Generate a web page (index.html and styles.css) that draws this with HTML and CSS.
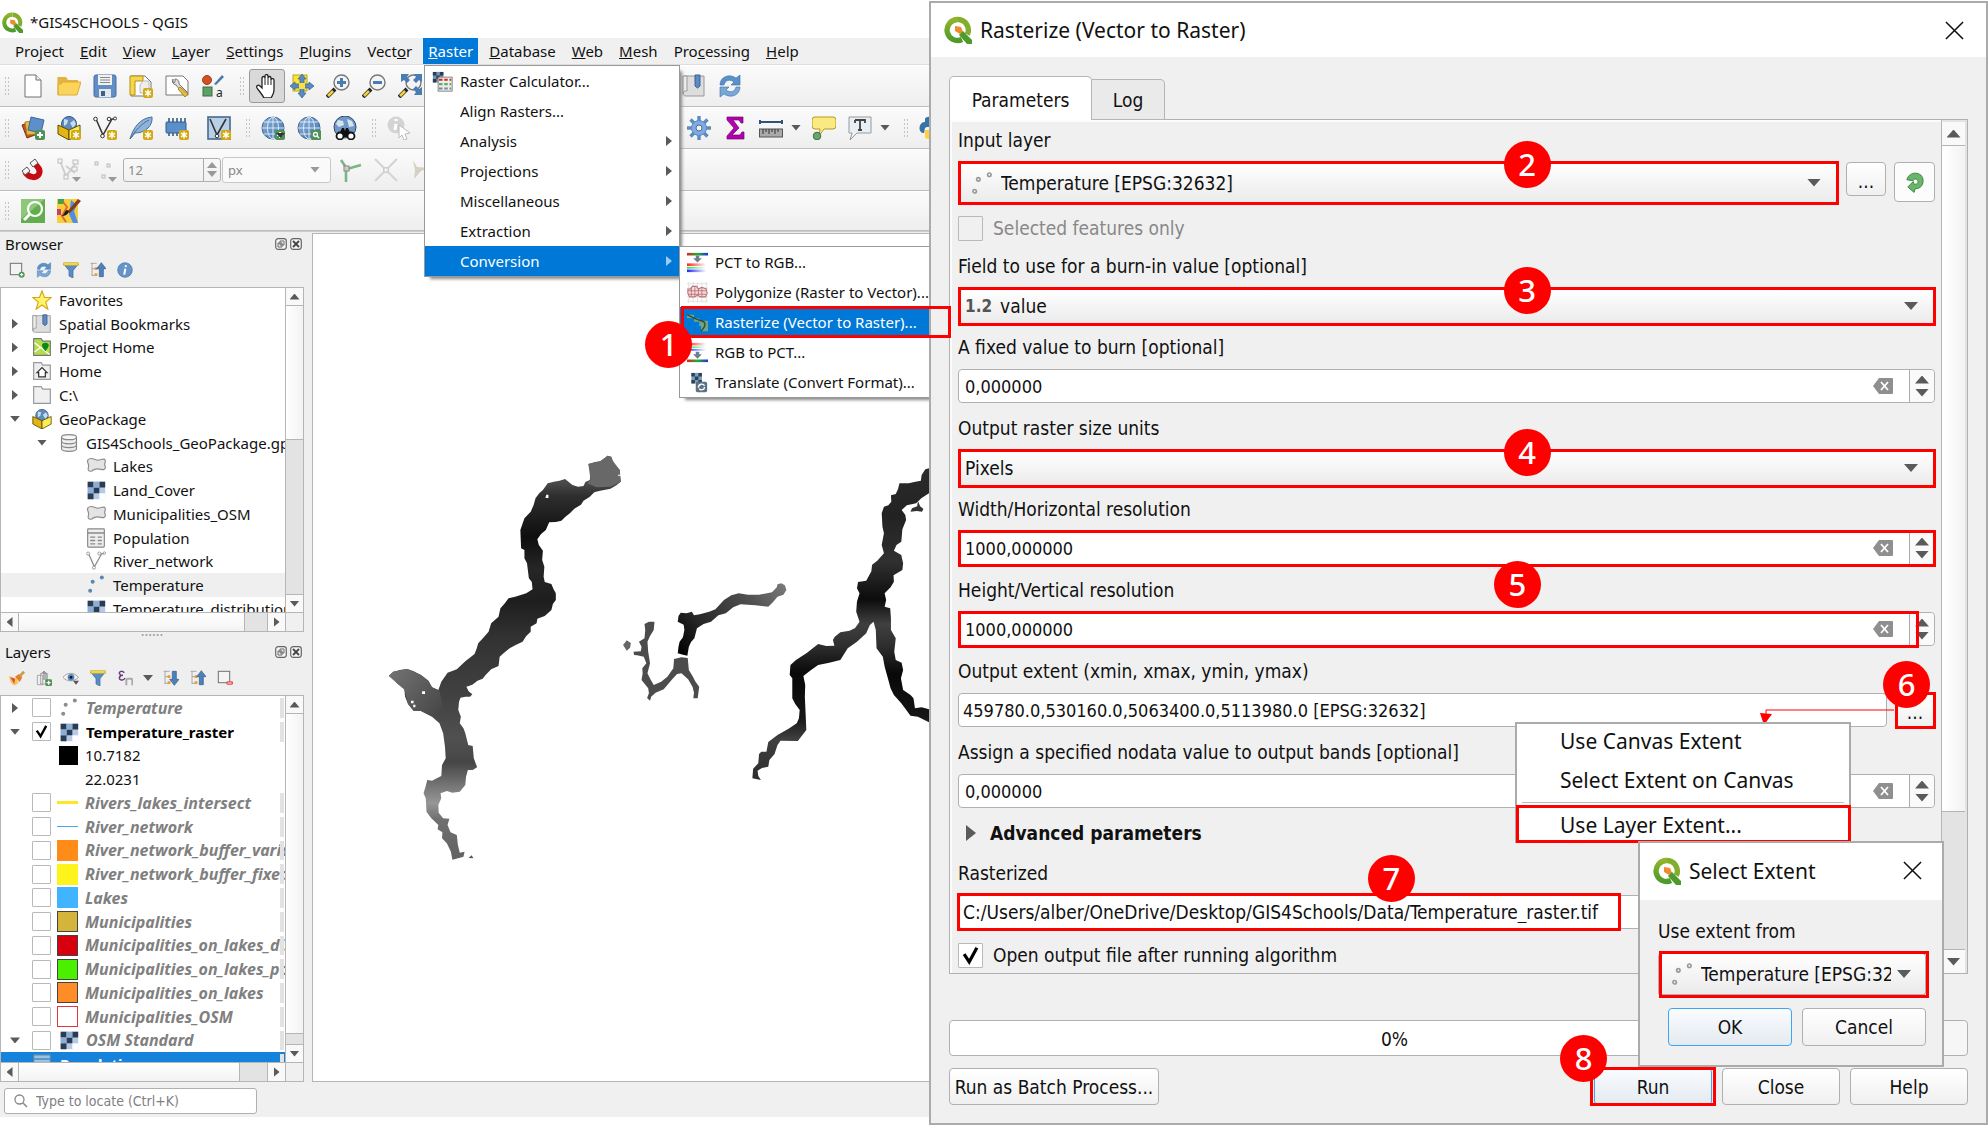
FILE: index.html
```html
<!DOCTYPE html>
<html lang="en">
<head>
<meta charset="utf-8">
<title>*GIS4SCHOOLS - QGIS</title>
<link rel="stylesheet" href="styles.css">
</head>
<body>
<svg class="defs" aria-hidden="true">
  <defs>
    <linearGradient id="gq" x1="0" y1="0" x2="0" y2="1"><stop offset="0" stop-color="#8fb52b"/><stop offset="1" stop-color="#4f9a2c"/></linearGradient>
    <linearGradient id="gb" x1="0" y1="0" x2="1" y2="1"><stop offset="0" stop-color="#8db4dd"/><stop offset="1" stop-color="#3f72ab"/></linearGradient>
    <linearGradient id="spec" x1="0" y1="0" x2="1" y2="0"><stop offset="0" stop-color="#e02020"/><stop offset=".5" stop-color="#20b030"/><stop offset="1" stop-color="#2030e0"/></linearGradient>
    <linearGradient id="fr" x1="0" y1="0" x2="1" y2="0"><stop offset="0" stop-color="#f22"/><stop offset="1" stop-color="#fff"/></linearGradient>
    <linearGradient id="fg" x1="0" y1="0" x2="1" y2="0"><stop offset="0" stop-color="#2d4"/><stop offset="1" stop-color="#fff"/></linearGradient>
    <linearGradient id="fb" x1="0" y1="0" x2="1" y2="0"><stop offset="0" stop-color="#22f"/><stop offset="1" stop-color="#fff"/></linearGradient>
  </defs>
  <symbol id="qgis" viewBox="0 0 28 28"><path d="M14 3.500a10.500 10.500 0 1 0 4 20" fill="none" stroke="url(#gq)" stroke-width="5.400"/><path d="M14 3.500a10.500 10.500 0 0 1 9.300 15" fill="none" stroke="#82ae2b" stroke-width="5.400"/><path d="M11 10l6 1 2 5-3 2-5-3z" fill="#f08a2c"/><path d="M15 19l4-4 9 9v4h-5z" fill="#4f9a2c"/></symbol>
  <symbol id="plus" viewBox="0 0 24 24"><rect x="14" y="14" width="10" height="10" rx="2" fill="#4e9258"/><path d="M19 16v6M16 19h6" stroke="#fff" stroke-width="2"/></symbol>
  <symbol id="star" viewBox="0 0 24 24"><rect x="14" y="14" width="10" height="10" rx="2" fill="#d3a912"/><path d="M19 15.500v7M16 17.200l6 3.600M22 17.200l-6 3.600" stroke="#fff" stroke-width="1.500"/></symbol>
  <symbol id="new" viewBox="0 0 24 24"><path d="M4 1h11l5 5v17H4z" fill="#fff" stroke="#707070"/><path d="M15 1v5h5" fill="#eee" stroke="#707070"/></symbol>
  <symbol id="open" viewBox="0 0 24 24"><path d="M1 3h8l2 3h10v4H1z" fill="#e2b33f"/><path d="M1 21V3M1 21h19l4-13H6L4 10H1z" fill="#fbd45b" stroke="#e0ad38"/></symbol>
  <symbol id="save" viewBox="0 0 24 24"><rect x="1" y="1" width="22" height="22" rx="2" fill="#5f8fc4" stroke="#456f9f"/><path d="M5 1h14v10H5z" fill="#f2f2f2"/><path d="M7 3.500h10M7 6h10M7 8.500h10" stroke="#888"/><path d="M6 15h12v8H6z" fill="#e3e8ee"/><path d="M8 17h4v5H8z" fill="#3d5f88"/></symbol>
  <symbol id="layout" viewBox="0 0 24 24"><path d="M2 2h14l6 6v14H2z" fill="#fff" stroke="#777"/><path d="M1 2h13v5H6v14H1z" fill="#f6d64a" stroke="#b78f14"/><path d="M14 7h6v12h-9v-8z" fill="#eee" stroke="#bbb"/><use href="#star"/></symbol>
  <symbol id="manager" viewBox="0 0 24 24"><path d="M1 2h17l5 5v14H1z" fill="#fff" stroke="#777"/><path d="M8 5a4 4 0 0 0 3 6l9 11 3-3-9-9a4 4 0 0 0-4-5v3l-2 1z" fill="#ddd" stroke="#777"/><path d="M15 13l8 7-3 3-7-8z" fill="#e4bd3a" stroke="#a9862b"/></symbol>
  <symbol id="style" viewBox="0 0 24 24"><circle cx="6" cy="6" r="4.500" fill="#cf5224" stroke="#a33c15"/><path d="M13 10L21 1l2 2-8 8z" fill="#4d79ad"/><rect x="2" y="13" width="9" height="9" fill="#5fa069" stroke="#37723f"/><text x="15" y="23" font-size="12" font-family="Noto Sans" fill="#222">a</text></symbol>
  <symbol id="hand" viewBox="0 0 24 24"><path d="M7 14V4c0-2 3-2 3 0V2c0-2 3-2 3 0v2c0-2 3-2 3 0v2c0-2 3-1.500 3 0v10c0 4-2 6-3 8H9C7 20 4 17 2 14c-1-2 1-4 3-2z" fill="#fff" stroke="#222" stroke-width="1.300"/><path d="M10 4v7M13 4v7M16 6v5" stroke="#222"/></symbol>
  <symbol id="pan" viewBox="0 0 24 24"><rect x="3" y="1" width="14" height="16" fill="#fae13c" stroke="#c4a61b"/><path d="M12 0l4 5h-2v5h5V8l5 4-5 4v-2h-5v5h2l-4 5-4-5h2v-5H5v2l-5-4 5-4v2h5V5H8z" fill="#5b8ac0" stroke="#36618f" stroke-width=".7"/><path d="M9 9h6v6H9z" fill="#fae13c"/></symbol>
  <symbol id="lens" viewBox="0 0 24 24"><path d="M9 15L1 23" stroke="#222" stroke-width="4"/><path d="M7 17l-5 5" stroke="#f5cf3c" stroke-width="2.600"/><circle cx="15.500" cy="8.500" r="7.500" fill="#f4f4f4" stroke="#777" stroke-width="1.400"/></symbol>
  <symbol id="zin" viewBox="0 0 24 24"><use href="#lens"/><path d="M15.500 4v9M11 8.500h9" stroke="#4a7bb5" stroke-width="3"/></symbol>
  <symbol id="zout" viewBox="0 0 24 24"><use href="#lens"/><path d="M11 8.500h9" stroke="#4a7bb5" stroke-width="3"/></symbol>
  <symbol id="zfull" viewBox="0 0 24 24"><use href="#lens"/><path d="M3 0h8L9 3l3 3-3 3-3-3-3 2zM24 0h-8l2 3-3 3 3 3 3-3 3 2zM24 21v-8l-3 2-3-3-3 3 3 3-2 3z" fill="#4a7bb5"/></symbol>
  <symbol id="book" viewBox="0 0 24 24"><path d="M1 2h21v20H4c-2 0-3-1-3-3z" fill="#ddd" stroke="#999"/><path d="M1 2h4v15c-2 0-4 0-4 3z" fill="#eee" stroke="#999"/><path d="M13 1h5v11l-2.500 2L13 12z" fill="#5b8ac0" stroke="#3a6494"/></symbol>
  <symbol id="refresh" viewBox="0 0 24 24"><path d="M2 11C2 3 11-1 18 4l4-3v10h-9l3-3C12 5 7 6 6 11z" fill="#5b90c9" stroke="#3a6ea8" stroke-width=".6"/><path d="M22 13c0 8-9 12-16 7l-4 3V13h9l-3 3c4 3 9 2 10-3z" fill="#78a7d8" stroke="#3a6ea8" stroke-width=".6"/></symbol>
  <symbol id="dsm" viewBox="0 0 24 24"><path d="M1 9l8-3 5 13-8 3z" fill="#c54c28" stroke="#863018"/><path d="M4 6l9-1 2 13-9 1z" fill="#e8bd3a" stroke="#a4811f"/><path d="M10 1l13 3-3 13-13-3z" fill="#5e8fca" stroke="#3b679d"/><use href="#plus"/></symbol>
  <symbol id="globe" viewBox="0 0 24 24"><circle cx="12" cy="12" r="11" fill="url(#gb)" stroke="#3c6a98"/><ellipse cx="12" cy="12" rx="5.500" ry="11" fill="none" stroke="#e8f0f8" stroke-width=".9"/><path d="M12 1v22M1 12h22M3 6h18M3 18h18" stroke="#e8f0f8" stroke-width=".9"/></symbol>
  <symbol id="gpkg" viewBox="0 0 24 24"><circle cx="12" cy="8" r="7.500" fill="#5d8bbd" stroke="#33587f"/><path d="M7 3l4 1-1 4-3 2zM13 7l4-3 2 4-3 4z" fill="#c8dcf0"/><path d="M1 9l11 5v10L1 18z" fill="#e2b414" stroke="#5d4a07"/><path d="M12 14l11-5v9l-11 6z" fill="#fbee54" stroke="#5d4a07"/></symbol>
  <symbol id="gpkgn" viewBox="0 0 24 24"><use href="#gpkg"/><use href="#star"/></symbol>
  <symbol id="vee" viewBox="0 0 24 24"><path d="M3 3l7 16L19 3h3" fill="none" stroke="currentColor" stroke-width="1.500"/><g fill="#fff" stroke="currentColor"><circle cx="2.500" cy="3" r="1.800"/><circle cx="9.500" cy="20" r="1.800"/><circle cx="16" cy="3" r="1.800"/><circle cx="22" cy="2.500" r="1.500"/></g></symbol>
  <symbol id="veen" viewBox="0 0 24 24"><use href="#vee"/><use href="#star"/></symbol>
  <symbol id="feather" viewBox="0 0 24 24"><path d="M1 23C4 12 11 2 23 1c1 8-6 16-17 16z" fill="#8fb3d9" stroke="#476f9c"/><path d="M1 23C7 14 12 8 20 4" fill="none" stroke="#476f9c"/><use href="#star"/></symbol>
  <symbol id="chip" viewBox="0 0 24 24"><path d="M4 2v18M8 2v18M12 2v18M16 2v18M20 2v18" stroke="#345c88" stroke-width="1.600"/><rect x="1" y="6" width="20" height="11" rx="1" fill="#5b8fca" stroke="#345c88"/><use href="#star"/></symbol>
  <symbol id="virt" viewBox="0 0 24 24"><rect x="1" y="1" width="22" height="22" fill="#b9cfe6" stroke="#44698f" stroke-width="1.600"/><path d="M3 3l7 16 9-16" fill="none" stroke="#333" stroke-width="1.600"/><circle cx="10" cy="20" r="1.800" fill="#fff" stroke="#333"/><use href="#star"/></symbol>
  <symbol id="globea" viewBox="0 0 24 24"><use href="#globe"/><use href="#plus"/><path d="M15 17h9l-4.500 5z" fill="#333"/></symbol>
  <symbol id="globez" viewBox="0 0 24 24"><use href="#globe"/><rect x="14" y="14" width="10" height="10" rx="1" fill="#4e9258"/><circle cx="18.500" cy="18.500" r="2" fill="none" stroke="#fff" stroke-width="1.300"/><path d="M20 20l2 2" stroke="#fff" stroke-width="1.400"/></symbol>
  <symbol id="bino" viewBox="0 0 24 24"><circle cx="12" cy="11" r="11" fill="#6f98c4" stroke="#2f4d70"/><path d="M5 4l5 1 1 4-5 2-3-3zM14 3l5 2 2 5-5 1z" fill="#d5e3f1"/><path d="M5 21L9 12h2l1 3 1-3h2l4 9z" fill="#111"/><circle cx="7" cy="20" r="3.500" fill="#fff" stroke="#111" stroke-width="1.800"/><circle cx="18" cy="20" r="3.500" fill="#fff" stroke="#111" stroke-width="1.800"/></symbol>
  <symbol id="ident" viewBox="0 0 24 24"><circle cx="9" cy="9" r="8.500" fill="#d4d4d4"/><path d="M9 3v2M9 8l-1 6" stroke="#fff" stroke-width="3"/><path d="M12 9l11 8-5 1 2 5-3 1-2-5-3 3z" fill="#fff" stroke="#bbb"/></symbol>
  <symbol id="gear" viewBox="0 0 24 24"><path d="M12 0v24M0 12h24M3.500 3.500l17 17M20.500 3.500l-17 17" stroke="#5b8bc4" stroke-width="3.400"/><circle cx="12" cy="12" r="7.500" fill="#82aade" stroke="#5b8bc4"/><circle cx="12" cy="12" r="3" fill="#f4f4f4" stroke="#41709f"/></symbol>
  <symbol id="sigma" viewBox="0 0 24 24"><path d="M4 1h16v6h-2l-2-3h-6l6 8-7 7h8l2-3h2v7H4v-3l7-8-7-8z" fill="#b400ae" stroke="#6c0c69" stroke-width=".7"/></symbol>
  <symbol id="ruler" viewBox="0 0 24 24"><path d="M1 6h22M1 4v4M23 4v4" stroke="#2d5379" stroke-width="2"/><rect x="0.500" y="13" width="23" height="8" fill="#aaa" stroke="#555"/><path d="M4 13v5M7 13v3M10 13v5M13 13v3M16 13v5M19 13v3" stroke="#333"/></symbol>
  <symbol id="tip" viewBox="0 0 24 24"><path d="M3 1h18q3 0 3 3v6q0 3-3 3h-9l-5 7 1-7H3q-3 0-3-3V4q0-3 3-3z" fill="#f9ea81" stroke="#b39a21"/><circle cx="5" cy="20" r="3.800" fill="#6aa36d" stroke="#3b7440"/></symbol>
  <symbol id="tann" viewBox="0 0 24 24"><path d="M1 1h22v16H9l-7 7 2-7H1z" fill="#e9f0f5" stroke="#999"/><path d="M7 4h10v3M7 7V4M12 4v10M10 14h4" fill="none" stroke="#444" stroke-width="1.800"/></symbol>
  <symbol id="py" viewBox="0 0 24 24"><path d="M6 6V3c0-3 12-3 12 0v8H8c-3 0-2 4-3 6-6 0-6-10 0-11z" fill="#3672a4"/><path d="M18 18v3c0 3-12 3-12 0v-7h10c3 0 3-3 3-6 6 0 6 10-1 10z" fill="#ffd13c"/></symbol>
  <symbol id="magnet" viewBox="0 0 24 24"><path d="M4 14c5 7 12 6 14 2 2-4-1-7-4-10" fill="none" stroke="#c40d12" stroke-width="6"/><path d="M9 5l5-4 3 4-5 4zM1 13l5-4 3 4-5 4z" fill="#f5f5f5" stroke="#555"/></symbol>
  <symbol id="snapv" viewBox="0 0 24 24"><g stroke="#bdbdbd" fill="#f4f4f4"><path d="M3 3l6 15L20 4M9 8l9 7" fill="none" stroke="#cfcfcf" stroke-width="2"/><rect x="1" y="1" width="4" height="4"/><rect x="7" y="17" width="4" height="4"/><rect x="16" y="2" width="5" height="4"/><rect x="15" y="9" width="5" height="4"/></g><path d="M15 19h9l-4.500 5z" fill="#999"/></symbol>
  <symbol id="snapp" viewBox="0 0 24 24"><g fill="#eee" stroke="#bbb"><rect x="2" y="4" width="3" height="3"/><rect x="14" y="6" width="3" height="3"/><rect x="9" y="17" width="3" height="3"/></g><path d="M15 19h9l-4.500 5z" fill="#999"/></symbol>
  <symbol id="topo" viewBox="0 0 24 24"><path d="M3 2l6 9 14-4M8 11v13" fill="none" stroke="#7bb583" stroke-width="2.600"/><rect x="6" y="8" width="5" height="5" fill="#ccc" stroke="#888"/></symbol>
  <symbol id="cross" viewBox="0 0 24 24"><path d="M1 1l22 22M23 1L1 23" stroke="#d3d3d3" stroke-width="2"/><circle cx="12" cy="12" r="2.500" fill="#eee" stroke="#c4c4c4"/></symbol>
  <symbol id="self" viewBox="0 0 24 24"><path d="M3 2l4 7 13 1-9 3-7 8 1-9z" fill="#d5d0c4"/></symbol>
  <symbol id="osmg" viewBox="0 0 24 24"><rect width="24" height="24" fill="#63ae4c"/><path d="M0 0h24L0 20z" fill="#8cc878"/><circle cx="14" cy="10" r="7" fill="none" stroke="#fff" stroke-width="2.200"/><path d="M9 15l-6 6" stroke="#fff" stroke-width="3"/></symbol>
  <symbol id="quick" viewBox="0 0 24 24"><rect width="21" height="24" fill="#f7cf3b"/><path d="M0 10h4v6H0z" fill="#c04368"/><path d="M1 0h6v5H1z" fill="#3fa34d"/><path d="M14 1l6 5-3 6 4 12h-5l-4-9z" fill="#4d8ee6"/><path d="M6 3l4 5-5 9 4 6" fill="none" stroke="#e26a2e" stroke-width="2"/><path d="M21 0l3 2L13 14l-3-1z" fill="#8c3a18"/><path d="M12 12c-1 4-4 5-8 5 4-1 3-5 6-6z" fill="#1b1b1b"/></symbol>
  <symbol id="addl" viewBox="0 0 24 24"><rect x="2" y="2" width="17" height="17" fill="#f3f3f3" stroke="#777" stroke-width="1.600"/><circle cx="19" cy="19" r="4.500" fill="#4e9258"/><path d="M19 16.500v5M16.500 19h5" stroke="#fff" stroke-width="1.500"/></symbol>
  <symbol id="reml" viewBox="0 0 24 24"><rect x="2" y="2" width="17" height="17" fill="#f3f3f3" stroke="#777" stroke-width="1.600"/><rect x="14" y="17" width="10" height="5" rx="2" fill="#e64b50"/><path d="M16 19.500h6" stroke="#fff" stroke-width="1.300"/></symbol>
  <symbol id="filter" viewBox="0 0 24 24"><path d="M1 3h22l-8 10v11l-6-3v-8z" fill="#5b8cc4" stroke="#3b679a"/><path d="M1 1h22v4H1z" fill="#f4e04d" stroke="#bda52a"/></symbol>
  <symbol id="coll" viewBox="0 0 24 24"><path d="M1 2h9M3 2v19M3 10h5M3 20h5" stroke="#888" fill="none"/><path d="M7 8h4v4H7zM7 17h4v4H7z" fill="#f09a2b"/><path d="M17 1l7 9h-4v12h-6V10h-4z" fill="#4f80b9" stroke="#2f5a8c"/></symbol>
  <symbol id="expd" viewBox="0 0 24 24"><path d="M1 2h9M3 2v19M3 10h5M3 20h5" stroke="#888" fill="none"/><path d="M7 8h4v4H7zM7 17h4v4H7z" fill="#f09a2b"/><path d="M17 23l7-9h-4V2h-6v12h-4z" fill="#4f80b9" stroke="#2f5a8c"/></symbol>
  <symbol id="info" viewBox="0 0 24 24"><circle cx="12" cy="12" r="11" fill="#6494c8" stroke="#4272a6"/><path d="M13.500 5l-.6 2.500M12.500 10l-1.600 9" stroke="#fff" stroke-width="3"/></symbol>
  <symbol id="fav" viewBox="0 0 24 24"><path d="M12 1l3 8h8l-6.500 5.500L19 23l-7-5-7 5 2.500-8.500L1 9h8z" fill="#fdf36c" stroke="#d9a514" stroke-width="1.400"/></symbol>
  <symbol id="proj" viewBox="0 0 24 24"><path d="M2 2h9l2 3h9v17H2z" fill="#b6dc4b" stroke="#777" stroke-width="1.400"/><path d="M3 7l18 14M3 18l8-6" stroke="#fff" stroke-width="1.500"/><path d="M12 10a4 3 0 0 1 8 0c0 3-4 7-4 7s-4-4-4-7" fill="#0b8a1a"/></symbol>
  <symbol id="home" viewBox="0 0 24 24"><path d="M2 2h9l2 3h9v17H2z" fill="#eee" stroke="#999" stroke-width="1.400"/><path d="M6 14l6-6 6 6h-2v5H8v-5z" fill="#fff" stroke="#333" stroke-width="1.500"/></symbol>
  <symbol id="folder" viewBox="0 0 24 24"><path d="M2 2h9l2 3h9v17H2z" fill="#f0f0f0" stroke="#999" stroke-width="1.400"/></symbol>
  <symbol id="db" viewBox="0 0 24 24"><path d="M3 5v14c0 4 18 4 18 0V5" fill="#eee" stroke="#888" stroke-width="1.400"/><ellipse cx="12" cy="5" rx="9" ry="3" fill="#f7f7f7" stroke="#888" stroke-width="1.400"/><path d="M3 10c0 4 18 4 18 0M3 14.500c0 4 18 4 18 0" fill="none" stroke="#888" stroke-width="1.400"/></symbol>
  <symbol id="poly" viewBox="0 0 24 24"><path d="M2 5c5-5 8 0 12 0 4 0 8-3 9 0 1 4-2 4 0 7 1 4-2 5-5 4-5-1-8-1-11 2-4 1-5-1-4-5 1-3-2-5-1-8z" fill="#e4e4e4" stroke="#8c8c8c" stroke-width="1.400"/></symbol>
  <symbol id="rast" viewBox="0 0 24 24"><rect x="2" y="2" width="21" height="21" fill="#b4cae8"/><path d="M2 2h7v7H2zM16 2h7v7h-7zM9 9h7v7H9zM2 16h7v7H2z" fill="#2b3c52"/><path d="M9 2h7v7H9zM2 9h7v7H2z" fill="#8eaed8"/><path d="M16 16h7v7h-7z" fill="#fff"/></symbol>
  <symbol id="tbl" viewBox="0 0 24 24"><rect x="2" y="1" width="20" height="22" rx="1" fill="#eee" stroke="#888" stroke-width="1.400"/><path d="M2 6h20M5 11h6M14 11h5M5 15h6M14 15h5M5 19h6M14 19h5" stroke="#888" stroke-width="1.600"/></symbol>
  <symbol id="pts" viewBox="0 0 24 24"><g fill="currentColor"><circle cx="5" cy="19" r="2.400"/><circle cx="8" cy="8" r="2.400"/><circle cx="19" cy="3" r="2.400"/></g></symbol>
  <symbol id="ring" viewBox="0 0 24 24"><g fill="none" stroke="#999" stroke-width="1.800"><circle cx="4" cy="21" r="1.900"/><circle cx="8" cy="8" r="1.900"/><circle cx="20" cy="3" r="1.900"/></g></symbol>
  <symbol id="brush" viewBox="0 0 24 24"><path d="M0 9l12 4 2 7-5 3C3 22 1 16 0 9z" fill="#f3c65a"/><path d="M2 11l7 2-1 8z" fill="#e3474a"/><path d="M9 10l6-4 5 5-4 7z" fill="#e87c2d"/><path d="M15 8l6-7 3 3-7 7z" fill="#c99b3c"/></symbol>
  <symbol id="grp" viewBox="0 0 24 24"><path d="M2 8h8v14H2zM7 5h10v16H7z" fill="#eee" stroke="#888"/><path d="M12 2v13M9 5l3-3 3 3v12" fill="none" stroke="#777" stroke-width="1.500"/><use href="#plus"/></symbol>
  <symbol id="eye" viewBox="0 0 24 24"><path d="M0 11C6 3 17 3 23 11 17 18 6 18 0 11z" fill="#f4f4f4" stroke="#999" stroke-width="1.400"/><circle cx="12" cy="11" r="5" fill="#5784b8"/><circle cx="12" cy="11" r="2" fill="#112"/><path d="M15 16h9l-4.500 6z" fill="#555"/></symbol>
  <symbol id="eps" viewBox="0 0 24 24"><path d="M11 4C7 0 2 3 4 6c1 2 3 2 5 2-7 0-7 8-1 7 2 0 3-1 4-3" fill="none" stroke="#6d3a80" stroke-width="2.200"/><path d="M14 23v-8q0-2 2-2h5q2 0 2 2v8" fill="none" stroke="#aaa" stroke-width="3"/></symbol>
  <symbol id="calc" viewBox="0 0 24 24"><path d="M1 1h12v12H1z" fill="#6f93b6"/><path d="M1 1h4v4H1zM9 1h4v4H9zM5 5h4v4H5zM1 9h4v4H1z" fill="#2b3c52"/><rect x="7" y="7" width="16" height="16" fill="#ececec" stroke="#777"/><path d="M8 10h14" stroke="#d22" stroke-width="2.500" stroke-dasharray="4 2"/><path d="M8 15h14" stroke="#5fae63" stroke-width="2.500" stroke-dasharray="4 2"/><path d="M8 20h14" stroke="#789" stroke-width="2.500" stroke-dasharray="4 2"/></symbol>
  <symbol id="pct" viewBox="0 0 24 24"><path d="M0 1h24v3H0z" fill="url(#spec)"/><path d="M10 4h4v3h3l-5 5-5-5h3z" fill="#6d7f8f"/><path d="M0 13h22v3H0z" fill="url(#fr)"/><path d="M0 17h22v2H0z" fill="url(#fg)"/><path d="M0 20h22v3H0z" fill="url(#fb)"/></symbol>
  <symbol id="rgb" viewBox="0 0 24 24"><path d="M0 20h24v3H0z" fill="url(#spec)"/><path d="M10 11h4v3h3l-5 5-5-5h3z" fill="#6d7f8f"/><path d="M0 1h22v3H0z" fill="url(#fr)"/><path d="M0 5h22v2H0z" fill="url(#fg)"/><path d="M0 8h22v2H0z" fill="url(#fb)"/></symbol>
  <symbol id="pgz" viewBox="0 0 24 24"><path d="M2 0v24M7 0v24M12 0v24M17 0v24M22 0v24M0 2h24M0 7h24M0 12h24M0 17h24M0 22h24" stroke="#dedede"/><path d="M1 8h3l2-3h5l2 3 4-2 5 2 1 5-2 4h-6l-3-2-3 2H3l-2-4z" fill="#f8dada" stroke="#b87277" stroke-width="1.200"/><path d="M1 10h21M1 14h21M5 6v10M9 6v10M13 8v8M17 7v10" stroke="#b87277"/></symbol>
  <symbol id="rz" viewBox="0 0 24 24"><path d="M0 3h8v4H0zM8 7h6v4H8zM14 10h10v12h-8v-6h-2z" fill="#6fa287"/><path d="M0 3l8 4 8 3c6 1 6 6 0 12" fill="none" stroke="#2f4c2b" stroke-width="1.500"/></symbol>
  <symbol id="trans" viewBox="0 0 24 24"><path d="M5 1h12v12H5z" fill="#7f9db8"/><path d="M5 1h4v4H5zM13 1h4v4h-4zM9 5h4v4H9zM5 9h4v4H5zM13 9h4v4h-4z" fill="#2b4256"/><rect x="10" y="11" width="13" height="12" rx="2" fill="#5a7186"/><path d="M13 18c0-5 6-5 7-2M20 17c0 4-5 4-6 2" fill="none" stroke="#fff" stroke-width="1.500"/></symbol>
  <symbol id="x" viewBox="0 0 20 20"><path d="M1 1l18 18M19 1L1 19" stroke="#111" stroke-width="1.600"/></symbol>
  <symbol id="clr" viewBox="0 0 20 16"><path d="M6 0h13q1 0 1 1v14q0 1-1 1H6L0 8z" fill="#8f8f8f"/><path d="M8 4l7 8M15 4l-7 8" stroke="#fff" stroke-width="1.800"/></symbol>
  <symbol id="iter" viewBox="0 0 20 22"><path d="M1 8C3-2 19-2 19 9c0 7-5 9-9 9l-1 4-7-6 6-6 1 3c4 0 5-2 4-4-1-3-5-2-5 0z" fill="#6ab56c" stroke="#2f8237"/></symbol>
  <symbol id="float" viewBox="0 0 12 12"><rect x=".7" y=".7" width="10.600" height="10.600" rx="2.500" fill="#f4f4f4" stroke="#666" stroke-width="1.200"/><path d="M5 3h4v4H5zM3 5h4v4H3z" fill="none" stroke="#666"/></symbol>
  <symbol id="close" viewBox="0 0 12 12"><rect x=".7" y=".7" width="10.600" height="10.600" rx="2.500" fill="#f4f4f4" stroke="#666" stroke-width="1.200"/><path d="M3 3l6 6M9 3L3 9" stroke="#444" stroke-width="1.800"/></symbol>
  <symbol id="mag" viewBox="0 0 14 14"><circle cx="5.500" cy="5.500" r="4.500" fill="none" stroke="#888" stroke-width="1.300"/><path d="M9 9l4 4" stroke="#888" stroke-width="1.600"/></symbol>
</svg>

<div class="app">
<main class="window">
  <header class="titlebar"><svg><use href="#qgis"/></svg><h1>*GIS4SCHOOLS - QGIS</h1></header>
  <nav class="menubar">
    <a href="#">Pro<u>j</u>ect</a><a href="#"><u>E</u>dit</a><a href="#"><u>V</u>iew</a><a href="#"><u>L</u>ayer</a><a href="#"><u>S</u>ettings</a><a href="#"><u>P</u>lugins</a><a href="#">Vect<u>o</u>r</a><a href="#" class="open"><u>R</u>aster</a><a href="#"><u>D</u>atabase</a><a href="#"><u>W</u>eb</a><a href="#"><u>M</u>esh</a><a href="#">Pro<u>c</u>essing</a><a href="#"><u>H</u>elp</a>
  </nav>
  <div class="toolbar">
    <i class="grip"></i>
    <svg><use href="#new"/></svg><svg><use href="#open"/></svg><svg><use href="#save"/></svg><svg><use href="#layout"/></svg><svg><use href="#manager"/></svg><svg><use href="#style"/></svg>
    <i class="grip wide"></i>
    <span class="pressed"><svg><use href="#hand"/></svg></span><svg><use href="#pan"/></svg><svg><use href="#zin"/></svg><svg><use href="#zout"/></svg><svg><use href="#zfull"/></svg>
    <span class="gap1"></span><svg><use href="#book"/></svg><svg><use href="#refresh"/></svg>
  </div>
  <div class="toolbar">
    <i class="grip"></i>
    <svg><use href="#dsm"/></svg><svg><use href="#gpkgn"/></svg><svg class="dark"><use href="#veen"/></svg><svg><use href="#feather"/></svg><svg><use href="#chip"/></svg><i class="sep"></i><svg><use href="#virt"/></svg>
    <i class="grip wide"></i>
    <svg><use href="#globea"/></svg><svg><use href="#globez"/></svg><svg><use href="#bino"/></svg>
    <i class="grip wide"></i><svg><use href="#ident"/></svg>
    <span class="gap2"></span><svg><use href="#gear"/></svg><svg><use href="#sigma"/></svg><svg><use href="#ruler"/></svg><i class="drop"></i><svg><use href="#tip"/></svg><svg><use href="#tann"/></svg><i class="drop"></i><i class="grip wide"></i><svg><use href="#py"/></svg>
  </div>
  <div class="toolbar">
    <i class="grip"></i>
    <svg><use href="#magnet"/></svg><svg><use href="#snapv"/></svg><svg><use href="#snapp"/></svg>
    <div class="tolerance"><input type="text" value="12" aria-label="Tolerance" disabled><span class="steps"><i class="up"></i><i class="down"></i></span></div>
    <div class="units"><select aria-label="Units" disabled><option>px</option></select><i class="down"></i></div>
    <svg><use href="#topo"/></svg><svg><use href="#cross"/></svg><svg><use href="#self"/></svg>
  </div>
  <div class="toolbar plugins">
    <i class="grip"></i><svg><use href="#osmg"/></svg><svg><use href="#quick"/></svg>
  </div>
  <div class="workspace">
    <aside class="docks">
      <section class="dock browser">
        <div class="dock-title"><h2>Browser</h2><svg><use href="#float"/></svg><svg><use href="#close"/></svg></div>
        <div class="dock-tools"><svg><use href="#addl"/></svg><svg><use href="#refresh"/></svg><svg><use href="#filter"/></svg><svg><use href="#coll"/></svg><svg><use href="#info"/></svg></div>
        <div class="frame">
          <div class="view">
            <ul class="tree">
              <li><i></i><svg><use href="#fav"/></svg>Favorites</li>
              <li><i class="right"></i><svg><use href="#book"/></svg>Spatial Bookmarks</li>
              <li><i class="right"></i><svg><use href="#proj"/></svg>Project Home</li>
              <li><i class="right"></i><svg><use href="#home"/></svg>Home</li>
              <li><i class="right"></i><svg><use href="#folder"/></svg>C:\</li>
              <li><i class="down"></i><svg><use href="#gpkg"/></svg>GeoPackage</li>
              <li class="l1"><i class="down"></i><svg><use href="#db"/></svg>GIS4Schools_GeoPackage.gpkg</li>
              <li class="l2"><i></i><svg><use href="#poly"/></svg>Lakes</li>
              <li class="l2"><i></i><svg><use href="#rast"/></svg>Land_Cover</li>
              <li class="l2"><i></i><svg><use href="#poly"/></svg>Municipalities_OSM</li>
              <li class="l2"><i></i><svg><use href="#tbl"/></svg>Population</li>
              <li class="l2"><i></i><svg class="grey"><use href="#vee"/></svg>River_network</li>
              <li class="l2 current"><i></i><svg class="blue"><use href="#pts"/></svg>Temperature</li>
              <li class="l2"><i></i><svg><use href="#rast"/></svg>Temperature_distribution</li>
            </ul>
          </div>
          <div class="vbar"><b><i class="up"></i></b><span></span><em></em><b><i class="down"></i></b></div>
          <div class="hbar"><b><i class="left"></i></b><span></span><em></em><b><i class="right"></i></b></div>
          <div class="corner"></div>
        </div>
      </section>
      <div class="splitter">······</div>
      <section class="dock layers">
        <div class="dock-title"><h2>Layers</h2><svg><use href="#float"/></svg><svg><use href="#close"/></svg></div>
        <div class="dock-tools"><svg><use href="#brush"/></svg><svg><use href="#grp"/></svg><svg><use href="#eye"/></svg><svg><use href="#filter"/></svg><svg><use href="#eps"/></svg><i class="down"></i><svg><use href="#expd"/></svg><svg><use href="#coll"/></svg><svg><use href="#reml"/></svg></div>
        <div class="frame">
          <div class="view">
            <ul class="legend">
              <li><i class="right"></i><input type="checkbox" aria-label="Temperature"><svg class="grey"><use href="#pts"/></svg><span>Temperature</span></li>
              <li class="on"><i class="down"></i><input type="checkbox" aria-label="Temperature_raster" checked><svg><use href="#rast"/></svg><span>Temperature_raster</span></li>
              <li class="value"><b class="sw black"></b><span>10.7182</span></li>
              <li class="value"><b class="sw none"></b><span>22.0231</span></li>
              <li><i></i><input type="checkbox" aria-label="Rivers_lakes_intersect"><b class="ln yellow"></b><span>Rivers_lakes_intersect</span></li>
              <li><i></i><input type="checkbox" aria-label="River_network"><b class="ln thin"></b><span>River_network</span></li>
              <li><i></i><input type="checkbox" aria-label="River_network_buffer_variable"><b class="sw orange"></b><span>River_network_buffer_variable</span></li>
              <li><i></i><input type="checkbox" aria-label="River_network_buffer_fixed"><b class="sw lemon"></b><span>River_network_buffer_fixed</span></li>
              <li><i></i><input type="checkbox" aria-label="Lakes"><b class="sw sky"></b><span>Lakes</span></li>
              <li><i></i><input type="checkbox" aria-label="Municipalities"><b class="sw lined gold"></b><span>Municipalities</span></li>
              <li><i></i><input type="checkbox" aria-label="Municipalities_on_lakes_dissolved"><b class="sw lined red"></b><span>Municipalities_on_lakes_dissolved</span></li>
              <li><i></i><input type="checkbox" aria-label="Municipalities_on_lakes_pop"><b class="sw lined green"></b><span>Municipalities_on_lakes_pop</span></li>
              <li><i></i><input type="checkbox" aria-label="Municipalities_on_lakes"><b class="sw lined amber"></b><span>Municipalities_on_lakes</span></li>
              <li><i></i><input type="checkbox" aria-label="Municipalities_OSM"><b class="sw outline"></b><span>Municipalities_OSM</span></li>
              <li><i class="down"></i><input type="checkbox" aria-label="OSM Standard"><svg><use href="#rast"/></svg><span>OSM Standard</span></li>
              <li class="selected"><i></i><svg><use href="#tbl"/></svg><span>Population</span></li>
            </ul>
          </div>
          <div class="vbar"><b><i class="up"></i></b><span></span><em></em><b><i class="down"></i></b></div>
          <div class="hbar"><b><i class="left"></i></b><span></span><em></em><b><i class="right"></i></b></div>
          <div class="corner"></div>
        </div>
      </section>
    </aside>
    <section class="canvas">
      <svg viewBox="0 0 1540 1350" preserveAspectRatio="none">
        <defs>
          <linearGradient id="r1" gradientUnits="userSpaceOnUse" x1="0" y1="77" x2="0" y2="1289"><stop offset="0" stop-color="#666"/><stop offset=".07" stop-color="#484848"/><stop offset=".1" stop-color="#2e2e2e"/><stop offset=".2" stop-color="#0e0e0e"/><stop offset=".28" stop-color="#262626"/><stop offset=".36" stop-color="#1e1e1e"/><stop offset=".45" stop-color="#323232"/><stop offset=".6" stop-color="#424242"/><stop offset=".7" stop-color="#505050"/><stop offset=".76" stop-color="#464646"/><stop offset=".82" stop-color="#787878"/><stop offset=".86" stop-color="#969696"/><stop offset=".9" stop-color="#707070"/><stop offset="1" stop-color="#626262"/></linearGradient>
          <linearGradient id="r2" gradientUnits="userSpaceOnUse" x1="870" y1="660" x2="1150" y2="470"><stop offset="0" stop-color="#050505"/><stop offset=".25" stop-color="#262626"/><stop offset=".7" stop-color="#505050"/><stop offset="1" stop-color="#787878"/></linearGradient>
          <linearGradient id="r3" gradientUnits="userSpaceOnUse" x1="0" y1="115" x2="0" y2="1050"><stop offset="0" stop-color="#2c2c2c"/><stop offset=".15" stop-color="#222"/><stop offset=".3" stop-color="#303030"/><stop offset=".42" stop-color="#0c0c0c"/><stop offset=".5" stop-color="#404040"/><stop offset=".57" stop-color="#2e2e2e"/><stop offset=".66" stop-color="#080808"/><stop offset=".8" stop-color="#161616"/><stop offset=".87" stop-color="#404040"/><stop offset="1" stop-color="#2c2c2c"/></linearGradient>
          <linearGradient id="r4" gradientUnits="userSpaceOnUse" x1="80" y1="730" x2="230" y2="840"><stop offset="0" stop-color="#727272"/><stop offset="1" stop-color="#464646"/></linearGradient>
        </defs>
        <path fill="url(#r1)" d="M618 102L636 96 650 94 660 86 670 77 680 80 684 92 690 104 703 120 704 140 706 155 694 166 678 176 650 182 634 187 622 200 605 212 598 224 580 236 568 250 556 260 545 272 530 276 512 277 503 300 490 312 480 328 484 345 495 362 493 390 499 410 497 440 500 456 518 462 524 478 530 490 530 510 522 522 518 540 500 558 480 566 478 580 462 590 462 605 450 618 440 635 420 646 405 655 390 668 378 680 375 708 355 718 340 735 332 746 318 752 304 764 288 770 294 784 304 793 298 800 285 800 272 803 268 815 266 840 273 860 270 880 280 895 285 910 293 945 305 948 308 985 317 1012 305 1020 292 1020 287 1040 285 1065 270 1085 250 1088 235 1083 218 1090 220 1105 212 1125 213 1148 225 1165 242 1166 237 1185 245 1207 262 1215 265 1245 270 1268 283 1265 280 1280 268 1284 250 1289 246 1265 235 1240 222 1225 223 1207 210 1198 212 1185 193 1165 180 1145 178 1105 172 1090 178 1068 182 1050 195 1052 205 1046 220 1038 222 1005 232 985 230 950 225 910 215 880 195 860 165 843 145 842 130 822 122 800 120 778 100 760 90 744 78 738 90 725 112 719 128 717 145 724 165 735 185 752 195 772 212 780 220 755 237 728 262 718 285 694 310 672 316 655 320 640 335 622 348 605 355 580 375 560 380 535 392 520 402 505 420 500 450 490 467 478 465 456 457 445 452 400 445 385 445 360 436 355 434 300 445 265 462 245 470 225 475 205 485 190 495 180 508 160 525 155 540 152 555 147 565 156 575 165 590 170 605 168 610 156 622 150 624 120z"/>
        <path fill="url(#r4)" d="M78 738L90 725 128 717 165 735 185 752 195 772 215 782 225 830 200 862 165 843 145 842 130 822 120 778 100 760z"/>
        <path fill="#686868" d="M618 102L650 94 670 77 680 80 684 92 703 120 706 155 678 170 640 172 615 160 624 150z"/>
        <path fill="#fff" d="M504 194h6v10h-8zM168 784h8v8h-8zM138 812h7v8h-7zM144 824h6v8h-6zM698 134h12v3h-12zM285 1268h18v14h-18z"/>
        <path fill="#555" d="M294 1284l8-8 5 9z"/>
        <path fill="url(#r2)" d="M1115 487L1128 472 1130 463 1140 460 1150 466 1154 480 1146 494 1130 500 1118 516 1105 530 1070 526 1030 523 1010 532 990 550 970 556 950 575 930 582 912 595 908 612 905 625 896 636 890 650 886 677 874 674 860 670 862 650 865 635 874 622 878 600 876 584 860 575 862 558 868 548 884 550 898 545 904 556 920 553 945 545 962 538 985 510 1005 496 1025 490 1050 494 1080 494z"/>
        <path fill="#4c4c4c" d="M850 687L870 682 887 684 890 720 900 738 908 755 918 770 914 805 902 805 904 788 900 770 888 748 870 730 858 732 845 748 822 778 800 788 788 800 785 812 777 804 782 790 780 775 762 750 765 730 764 715 775 700 768 680 750 676 742 675 740 665 760 664 762 650 755 635 770 625 772 600 770 582 782 575 797 575 795 600 785 618 778 635 780 665 785 700 778 730 786 748 795 765 815 755 832 740 848 715z"/>
        <path fill="#666" d="M712 645l10-14 11 8-2 14-9 9z"/>
        <path fill="url(#r3)" d="M1540 115L1530 118 1520 135 1518 152 1500 156 1485 160 1460 160 1456 178 1450 192 1437 196 1438 215 1430 226 1418 230 1412 250 1414 290 1418 310 1412 345 1418 370 1400 392 1386 404 1384 424 1370 452 1348 456 1345 475 1352 490 1345 515 1343 545 1352 575 1340 594 1325 602 1300 607 1285 620 1280 630 1284 647 1262 648 1240 642 1210 668 1180 690 1165 705 1163 735 1170 745 1170 805 1178 822 1190 840 1188 865 1182 880 1160 896 1130 915 1105 936 1100 965 1086 965 1080 972 1078 1000 1064 1016 1062 1045 1085 1050 1078 1038 1076 1022 1088 1014 1105 1010 1108 990 1122 972 1130 945 1138 932 1185 933 1208 900 1206 850 1204 800 1205 765 1200 738 1218 722 1240 705 1270 698 1300 690 1320 655 1345 635 1370 610 1380 585 1390 575 1396 600 1398 655 1415 680 1420 710 1430 750 1436 775 1445 795 1465 820 1490 857 1510 860 1540 877 1540 838 1520 832 1502 835 1498 805 1490 795 1470 780 1464 745 1470 720 1466 698 1450 690 1446 665 1450 625 1437 600 1437 565 1435 535 1420 530 1424 510 1420 490 1436 472 1445 455 1444 436 1468 420 1470 400 1465 375 1445 362 1452 345 1465 335 1468 298 1478 270 1476 255 1466 240 1480 226 1505 220 1520 204 1540 190z"/>
        <path fill="#333" d="M1490 245l4-10 14-6 2-16 6 16 9 8-4 8-14-2z"/>
      </svg>
    </section>
  </div>
  <footer class="statusbar"><label class="locator"><svg><use href="#mag"/></svg><input type="text" placeholder="Type to locate (Ctrl+K)" aria-label="Locator"></label></footer>

  <div class="menu raster-menu">
    <button><svg><use href="#calc"/></svg>Raster Calculator...</button>
    <button>Align Rasters...</button>
    <button>Analysis<i class="right"></i></button>
    <button>Projections<i class="right"></i></button>
    <button>Miscellaneous<i class="right"></i></button>
    <button>Extraction<i class="right"></i></button>
    <button class="active">Conversion<i class="right"></i></button>
  </div>
  <div class="menu convert-menu">
    <button><svg><use href="#pct"/></svg>PCT to RGB...</button>
    <button><svg><use href="#pgz"/></svg>Polygonize (Raster to Vector)...</button>
    <button class="active"><svg><use href="#rz"/></svg>Rasterize (Vector to Raster)...</button>
    <button><svg><use href="#rgb"/></svg>RGB to PCT...</button>
    <button><svg><use href="#trans"/></svg>Translate (Convert Format)...</button>
  </div>
</main>

<section class="dialog">
  <header class="dialog-title"><svg class="logo"><use href="#qgis"/></svg><h2>Rasterize (Vector to Raster)</h2><button class="plain" aria-label="Close window"><svg class="x"><use href="#x"/></svg></button></header>
  <div class="dialog-body">
    <div class="tabs"><button class="tab selected">Parameters</button><button class="tab">Log</button></div>
    <div class="panel">
      <form class="form">
        <div class="group">
          <label for="layer">Input layer</label>
          <div class="row tall">
            <div class="combo tall"><svg><use href="#ring"/></svg><select id="layer"><option>Temperature [EPSG:32632]</option></select><i class="down"></i><span class="mark"></span></div>
            <button type="button" class="dots">...</button>
            <button type="button" class="iterate" aria-label="Iterate over this layer"><svg><use href="#iter"/></svg></button>
            <span class="badge mid">2</span>
          </div>
        </div>
        <label class="check off"><input type="checkbox" disabled>Selected features only</label>
        <div class="group">
          <label for="field">Field to use for a burn-in value [optional]</label>
          <div class="row"><div class="combo"><b class="num">1.2</b><select id="field"><option>value</option></select><i class="down"></i><span class="mark"></span></div><span class="badge mid">3</span></div>
        </div>
        <div class="group">
          <label for="fixed">A fixed value to burn [optional]</label>
          <div class="row"><div class="spin"><input id="fixed" type="text" value="0,000000"><svg><use href="#clr"/></svg><span class="steps"><i class="up"></i><i class="down"></i></span></div></div>
        </div>
        <div class="group">
          <label for="unit">Output raster size units</label>
          <div class="row"><div class="combo"><select id="unit"><option>Pixels</option></select><i class="down"></i><span class="mark"></span></div><span class="badge mid">4</span></div>
        </div>
        <div class="group">
          <label for="w">Width/Horizontal resolution</label>
          <div class="row"><div class="spin"><input id="w" type="text" value="1000,000000"><svg><use href="#clr"/></svg><span class="steps"><i class="up"></i><i class="down"></i></span><span class="mark"></span></div><span class="badge below">5</span></div>
        </div>
        <div class="group">
          <label for="h">Height/Vertical resolution</label>
          <div class="row"><div class="spin"><input id="h" type="text" value="1000,000000"><svg><use href="#clr"/></svg><span class="steps"><i class="up"></i><i class="down"></i></span><span class="mark short"></span></div></div>
        </div>
        <div class="group">
          <label for="extent">Output extent (xmin, xmax, ymin, ymax)</label>
          <div class="row"><input class="line coords" id="extent" type="text" value="459780.0,530160.0,5063400.0,5113980.0 [EPSG:32632]"><button type="button" class="dots">...<span class="mark"></span></button>
            <svg class="arrow" viewBox="0 0 134 16"><path d="M134 1H6v4" fill="none" stroke="#f00"/><path d="M0 4l12 1-8 11z" fill="#f00"/></svg>
            <span class="badge end">6</span></div>
        </div>
        <div class="group">
          <label for="nodata">Assign a specified nodata value to output bands [optional]</label>
          <div class="row"><div class="spin"><input id="nodata" type="text" value="0,000000"><svg><use href="#clr"/></svg><span class="steps"><i class="up"></i><i class="down"></i></span></div></div>
        </div>
        <button type="button" class="advanced"><i class="right"></i>Advanced parameters</button>
        <div class="group">
          <label for="out">Rasterized</label>
          <div class="row"><input class="line" id="out" type="text" value="C:/Users/alber/OneDrive/Desktop/GIS4Schools/Data/Temperature_raster.tif"><span class="mark path"></span><span class="badge output">7</span></div>
        </div>
        <label class="check"><input type="checkbox" checked>Open output file after running algorithm</label>
      </form>
      <div class="vbar"><b><i class="up"></i></b><span></span><em></em><b><i class="down"></i></b></div>
    </div>
    <div class="progress"><div class="bar" role="progressbar" aria-valuenow="0">0%</div><button class="btn" disabled aria-label="Cancel run"></button></div>
    <div class="buttons"><button class="btn batch">Run as Batch Process...</button><button class="btn default">Run<span class="mark"></span><span class="badge">8</span></button><button class="btn">Close</button><button class="btn">Help</button></div>
  </div>

  <div class="context">
    <button>Use Canvas Extent</button><button>Select Extent on Canvas</button><hr><button class="last">Use Layer Extent...<span class="mark"></span></button>
  </div>
  <section class="popup">
    <header class="dialog-title"><svg class="logo"><use href="#qgis"/></svg><h2>Select Extent</h2><button class="plain" aria-label="Close"><svg class="x"><use href="#x"/></svg></button></header>
    <div class="popup-body">
      <label for="from">Use extent from</label>
      <div class="combo tall"><svg><use href="#ring"/></svg><select id="from"><option>Temperature [EPSG:32632]</option></select><i class="down"></i><span class="mark"></span></div>
      <div class="popup-buttons"><button class="btn default">OK</button><button class="btn">Cancel</button></div>
    </div>
  </section>
</section>
<span class="mark menu-mark"></span>
<span class="badge menu-badge">1</span>
</div>
</body>
</html>
```
FILE: styles.css
```css
* { box-sizing: border-box; }
body { margin: 0; background: #fff; color: #111; font-family: "Noto Sans", sans-serif; font-size: 15px; }
button, input, select { font: inherit; color: inherit; margin: 0; padding: 0; border: 0; background: none; }
h1, h2, ul { margin: 0; padding: 0; font-weight: 400; list-style: none; }
.defs { position: absolute; width: 0; height: 0; }
svg { display: block; flex: none; overflow: visible; }

.app { position: relative; display: grid; grid-template-columns: 929fr 1059fr; min-height: 100vh; overflow: hidden; }

/* triangles */
i.up, i.down, i.left, i.right, i.drop { display: block; flex: none; background: #5a5a5a; width: 10px; height: 6px; }
i.down, i.drop { clip-path: polygon(0 0, 100% 0, 50% 100%); }
i.up { clip-path: polygon(50% 0, 100% 100%, 0 100%); }
i.right, i.left { width: 6px; height: 10px; }
i.right { clip-path: polygon(0 0, 100% 50%, 0 100%); }
i.left { clip-path: polygon(100% 0, 100% 100%, 0 50%); }

/* annotations */
.mark { position: absolute; inset: -2px -2px -3px -1px; border: 3px solid #f00; pointer-events: none; }
.badge { position: absolute; width: 47px; height: 47px; border-radius: 50%; background: #f00; color: #fff; font: 500 31px/46px "Noto Sans", sans-serif; text-align: center; z-index: 2; }

/* main window */
.window { position: relative; min-width: 0; display: flex; flex-direction: column; padding-bottom: 9px; }
.titlebar { height: 38px; display: flex; align-items: center; gap: 7px; padding: 6px 0 0 2px; }
.titlebar svg { width: 21px; height: 21px; }
.titlebar h1 { font-size: 15px; }
.menubar { height: 27px; background: #f0f0f0; border-bottom: 1px solid #ddd; display: flex; padding-left: 7px; overflow: hidden; }
.menubar a { color: inherit; text-decoration: none; padding: 0 8px; line-height: 27px; }
.menubar a.open { background: #0078d7; color: #fff; padding: 0 5px; margin: 0 3px; }
.toolbar { height: 42px; background: linear-gradient(#fbfbfb, #eee); border-bottom: 1px solid #bcbcbc; box-shadow: inset 0 1px #fff; display: flex; align-items: center; padding-left: 4px; overflow: hidden; }
.toolbar.plugins { height: 40px; }
.toolbar svg { width: 24px; height: 24px; margin: 0 6px; overflow: hidden; }
.grip { flex: none; width: 6px; height: 20px; margin-right: 5px; background: radial-gradient(circle, #c4c4c4 1px, transparent 1px) 0 0 / 3px 4px; }
.grip.wide { margin: 0 4px 0 8px; }
.sep { width: 1px; height: 20px; background: #ccc; margin: 0 3px; }
.pressed { border: 1px solid #999; border-radius: 3px; background: #d9d9d9; padding: 4px 0; margin-right: -1px; }
.pressed svg { margin: 0 5px; }
.gap1 { flex: 0 0 248px; }
.gap2 { flex: 0 0 264px; }
.toolbar .drop { margin: 0 5px 0 2px; }
.dark { color: #333; } .grey { color: #8c8c8c; } .blue { color: #5b88b0; }
.steps { display: flex; flex-direction: column; justify-content: center; align-items: center; gap: 3px; border-left: 1px solid #aaa; }
.tolerance { display: flex; width: 98px; height: 24px; border: 1px solid #b0b0b0; border-radius: 3px; }
.tolerance input { width: 79px; padding-left: 4px; font-size: 13px; color: #888; }
.tolerance .steps { flex: 1; }
.tolerance i, .units i { background: #999; }
.units { display: flex; align-items: center; width: 109px; height: 26px; margin: 0 1px; border: 1px solid #c8c8c8; border-radius: 3px; padding-right: 10px; background: #fafafa; }
.units select { flex: 1; appearance: none; padding-left: 5px; color: #888; font-size: 13px; opacity: 1; }

.workspace { flex: 1; display: flex; background: #efefef; border-top: 1px solid #ccc; padding-top: 1px; }
.docks { flex: none; width: 312px; padding-right: 8px; display: flex; flex-direction: column; }
.dock-title { display: flex; align-items: center; gap: 3px; height: 22px; padding: 0 2px 0 5px; }
.dock-title h2 { flex: 1; font-size: 15px; line-height: 22px; }
.dock-title svg { width: 12px; height: 12px; }
.dock-tools { display: flex; align-items: center; gap: 11px; height: 32px; padding: 0 0 2px 9px; }
.dock-tools svg { width: 16px; height: 16px; }
.layers .dock-tools i { margin: 0 -1px; }
.browser .frame { height: 345px; }
.layers .frame { height: 387px; }
.splitter { height: 9px; font-size: 14px; line-height: 6px; color: #999; text-align: center; }
.frame { display: grid; grid-template: minmax(0, 1fr) 19px / minmax(0, 1fr) 18px; border: 1px solid #b5b5b5; background: #fff; }
.view { overflow: hidden; }
.tree, .legend { display: flex; flex-direction: column; white-space: nowrap; }
.tree { height: 333px; }
.legend { height: 380px; }
.tree li, .legend li { flex: 1; display: flex; align-items: center; position: relative; line-height: 22px; }
.tree li { padding-left: 9px; }
.tree li i, .legend li i { flex: none; width: 10px; }
.tree li i.right, .legend li i.right { width: 6px; margin: 0 2px; }
.tree svg { width: 20px; height: 20px; margin: 0 7px 0 12px; }
.tree .l1 { padding-left: 36px; } .tree .l2 { padding-left: 63px; }
.tree .current { background: #efefef; }
.legend li { padding-left: 9px; color: #808080; font-weight: 700; font-style: italic; font-size: 16px; }
.legend li::after { content: ""; position: absolute; right: 1px; top: 2px; bottom: 2px; width: 4px; background: #e2e2e2; }
.legend li.value::after { display: none; }
.legend .on, .legend .value, .legend .selected { font-size: 15px; font-style: normal; }
.legend .on { color: #000; }
.legend .value { color: #111; font-weight: 400; padding-left: 57px; }
.legend svg { width: 20px; height: 20px; margin: 0 7px 0 8px; }
.legend input, .check input { appearance: none; flex: none; border: 1px solid #b9b9b9; background: #fff; border-radius: 1px; }
.legend input { width: 19px; height: 19px; margin-left: 12px; }
.legend input:checked, .check input:checked { background: #fff url("data:image/svg+xml,%3Csvg xmlns='http://www.w3.org/2000/svg' viewBox='0 0 18 18'%3E%3Cpath d='M4 8l4 6 6-11' fill='none' stroke='%23000' stroke-width='2.500'/%3E%3C/svg%3E") center / 100%; }
.sw { flex: none; width: 21px; height: 21px; margin: 0 7px 0 6px; }
.value .sw { width: 19px; height: 19px; margin: 0 7px 0 1px; }
.ln { flex: none; width: 21px; height: 3px; margin: 0 7px 0 6px; background: #fde725; }
.ln.thin { height: 1px; background: #4aa8e8; }
.black { background: #000; } .orange { background: #ff8c19; } .lemon { background: #fff31c; } .sky { background: #40b4ff; }
.lined { border: 1px solid #444; } .gold { background: #d5b43c; } .red { background: #d7000f; } .green { background: #4bf000; } .amber { background: #ff8c26; }
.outline { border: 1px solid #e8323c; background: #fff; }
.legend .selected { background: #1583dc; color: #fff; }
.legend .selected svg { margin: 0 8px 0 12px; opacity: .6; }
.vbar, .hbar { display: flex; background: #e3e3e3; }
.vbar { flex-direction: column; border-left: 1px solid #b5b5b5; }
.hbar { border-top: 1px solid #b5b5b5; }
.corner { background: #f0f0f0; border-left: 1px solid #b5b5b5; border-top: 1px solid #b5b5b5; }
.vbar b, .hbar b { flex: none; display: grid; place-items: center; background: #f9f9f9; width: 18px; height: 18px; }
.vbar b { width: auto; }
.hbar b { height: auto; }
.vbar b:first-child, .vbar span { border-bottom: 1px solid #b5b5b5; }
.vbar b:last-child { border-top: 1px solid #b5b5b5; }
.hbar b:first-child, .hbar span { border-right: 1px solid #b5b5b5; }
.hbar b:last-child { border-left: 1px solid #b5b5b5; }
.vbar span { background: linear-gradient(90deg, #fff, #f3f3f3); flex: 134; }
.hbar span { background: linear-gradient(#fff, #f3f3f3); flex: 226; }
.vbar em { flex: 155; } .hbar em { flex: 22; }
.layers .vbar span { flex: 323; } .layers .vbar em { flex: 10; }
.layers .hbar span { flex: 221; } .layers .hbar em { flex: 27; }
.canvas { flex: 1; min-width: 0; background: #fff; border: 1px solid #b5b5b5; border-width: 1px 0 1px 1px; padding: 196px 0 0 47px; overflow: hidden; }
.canvas svg { width: 100%; height: 450px; }
.statusbar { flex: none; height: 35px; background: #f0f0f0; padding: 6px 0 0 4px; }
.locator { display: flex; align-items: center; gap: 8px; width: 253px; height: 26px; border: 1px solid #b0b0b0; border-radius: 3px; background: #fff; padding-left: 9px; }
.locator svg { width: 14px; height: 14px; }
.locator input { flex: 1; min-width: 0; font: 14px "DejaVu Sans Condensed", sans-serif; outline: 0; }
.locator input::placeholder { color: #808080; }

/* menus */
.menu { position: absolute; display: flex; flex-direction: column; background: #fff; border: 1px solid #999; box-shadow: 4px 4px 3px -2px #888; }
.menu button { height: 30px; text-align: left; display: flex; align-items: center; padding: 0 7px 0 35px; position: relative; white-space: nowrap; }
.menu button svg { width: 21px; height: 21px; position: absolute; left: 7px; }
.menu button i { margin-left: auto; }
.menu .active { background: #0078d7; color: #fff; }
.menu .active i { background: #9ccbf5; }
.raster-menu { left: 424px; top: 65px; width: 256px; }
.convert-menu { left: 679px; top: 246px; width: 256px; }
.menu-mark { inset: 306px auto auto 681px; width: 270px; height: 32px; z-index: 3; }
.menu-badge { left: 645px; top: 321px; z-index: 4; }

/* dialog */
.dialog { position: relative; z-index: 2; margin: 1px 0 1px; border: 2px solid #ababab; background: #f0f0f0; font: 19px "DejaVu Sans Condensed", "DejaVu Sans", sans-serif; align-self: start; }
.dialog-title { height: 54px; display: flex; align-items: center; background: #fff; padding: 0 22px 0 13px; font-family: "Noto Sans", sans-serif; }
.dialog-title h2 { flex: 1; font-size: 21px; line-height: 28px; margin-left: 8px; }
.logo { width: 28px; height: 28px; }
.x { width: 19px; height: 19px; }
.dialog-body { padding: 19px 18px 18px 18px; }
.tabs { display: flex; align-items: flex-end; height: 44px; position: relative; margin-bottom: -1px; z-index: 1; }
.tab { height: 41px; width: 73px; border: 1px solid #b5b5b5; border-left: 0; border-radius: 0 5px 0 0; background: #eaeaea; }
.tab.selected { height: 44px; width: 143px; background: #fff; border: 1px solid #b5b5b5; border-bottom: 0; border-radius: 5px 5px 0 0; padding-top: 3px; }
.panel { display: flex; border: 1px solid #b0b0b0; box-shadow: inset 2px 2px #fcfcfc; }
.form { flex: 1; min-width: 0; display: flex; flex-direction: column; gap: 12px; padding: 7px 6px 4px 8px; }
.group > label { display: block; height: 26px; line-height: 26px; margin-bottom: 9px; }
.row { position: relative; display: flex; align-items: flex-start; gap: 8px; height: 34px; }
.row.tall { height: 41px; }
.combo, .spin, .line { position: relative; flex: 1; min-width: 0; height: 34px; display: flex; align-items: center; border: 1px solid #b0b0b0; border-radius: 4px; }
.combo { height: 37px; background: linear-gradient(#fff, #ebebeb); padding: 0 16px 0 6px; border-bottom: 2px solid #b0b0b0; }
.combo.tall { height: 42px; padding-left: 12px; }
.combo svg { width: 22px; height: 24px; margin-right: 8px; }
.combo select { flex: 1; min-width: 0; height: 100%; appearance: none; outline: 0; }
.combo i { width: 14px; height: 8px; }
.num { color: #555; font-size: 17px; margin-right: 8px; }
.spin, .line { background: #fff; }
.spin input { flex: 1; min-width: 0; padding-left: 6px; outline: 0; font-size: 18px; }
.spin svg { width: 20px; height: 16px; margin-right: 16px; }
.spin .steps { width: 25px; height: 100%; gap: 5px; background: #fafafa; border-radius: 0 4px 4px 0; }
.spin .steps i { width: 14px; height: 8px; }
.line { padding-left: 4px; outline: 0; }
.coords { font-size: 18px; }
.dots { position: relative; width: 40px; height: 34px; padding-top: 4px; background: linear-gradient(#fff, #f0f0f0); border: 1px solid #b0b0b0; border-radius: 4px; line-height: 20px; }
.iterate { width: 41px; height: 40px; display: grid; place-items: center; background: #fcfcfc; border: 1px solid #b0b0b0; border-radius: 4px; }
.iterate svg { width: 18px; height: 21px; }
.check { display: flex; align-items: center; gap: 10px; height: 28px; }
.check input { width: 25px; height: 25px; }
.check.off { height: 26px; color: #888; } .check.off input { background: #f0f0f0; }
.advanced { display: flex; align-items: center; gap: 14px; height: 28px; padding: 0 0 2px 8px; font-weight: 700; text-align: left; }
.advanced i { width: 10px; height: 16px; }
.mid { left: 58%; margin-left: -21px; top: -21px; }
.below { left: 57%; margin-left: -21px; top: 30px; }
.output { left: 44%; margin-left: -20px; top: -40px; }
.end { right: 5px; top: -32px; }
.short { right: 15px; }
.path { inset: -2px auto -2px -1px; width: 68%; }
.arrow { position: absolute; width: 134px; height: 16px; right: 41px; top: 16px; }
.panel .vbar { width: 26px; padding: 2px 2px 0 0; }
.panel .vbar b { height: 24px; }
.panel .vbar i { width: 14px; height: 8px; }
.panel .vbar span { flex: 666; } .panel .vbar em { flex: 137; }
.progress { display: flex; gap: 10px; margin-top: 46px; }
.bar { flex: 1; height: 36px; border: 1px solid #b0b0b0; border-radius: 4px; background: #fff; text-align: center; line-height: 36px; }
.btn { position: relative; width: 118px; height: 37px; border: 1px solid #b0b0b0; border-radius: 4px; background: linear-gradient(#fff, #f0f0f0); }
.progress .btn { height: 36px; background: #f6f6f6; }
.btn.default { border-color: #3ea5f5; background: linear-gradient(#fafcff, #e4eaf0); }
.buttons { display: flex; gap: 10px; margin-top: 12px; }
.buttons .batch { width: 210px; margin-right: auto; }
.buttons .mark { inset: -2px -5px; }
.buttons .badge { left: -35px; top: -34px; }

.context { position: absolute; right: 135px; top: 719px; width: 336px; border: 2px solid #ababab; background: #fff; display: flex; flex-direction: column; font: 21px "Noto Sans", sans-serif; z-index: 3; }
.context button { position: relative; height: 44px; padding-left: 43px; text-align: left; }
.context button:first-child { height: 34px; }
.context button.last { height: 38px; padding-top: 6px; }
.context hr { border: 0; border-top: 1px solid #bbb; margin: 0 5px; align-self: stretch; }
.context .mark { inset: 2px -2px -2px -1px; }
.popup { position: absolute; right: 42px; top: 838px; width: 306px; border: 2px solid #ababab; background: #f0f0f0; z-index: 4; }
.popup .dialog-title { height: 57px; padding-right: 20px; padding-bottom: 2px; }
.popup-body { padding: 18px 16px 19px 18px; }
.popup-body > label { display: block; line-height: 26px; margin-bottom: 9px; }
.popup .combo { padding-right: 14px; height: 43px; }
.popup .combo select { margin-right: 6px; }
.popup .combo .mark { inset: -3px -4px -4px 0; }
.popup-buttons { display: flex; gap: 10px; margin: 12px 0 0 10px; }
.popup-buttons .btn { flex: 1; height: 38px; }
```
